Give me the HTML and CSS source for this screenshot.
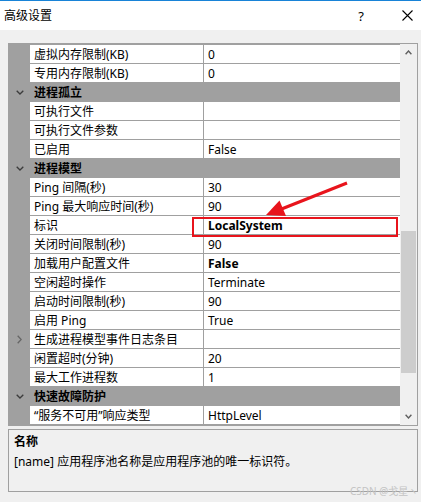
FILE: index.html
```html
<!DOCTYPE html>
<html lang="zh-CN">
<head>
<meta charset="utf-8">
<title>高级设置</title>
<link rel="stylesheet" href="styles.css">
</head>
<body>
<div class="titlebar">
  <span class="title">高级设置</span>
  <span class="help">?</span>
  <span class="close"><svg width="11" height="11" viewBox="0 0 11 11"><path d="M0.5 0.5 L10.5 10.5 M10.5 0.5 L0.5 10.5" stroke="#000" stroke-width="1.1" fill="none"/></svg></span>
</div>
<div class="main">
  <div class="grid">
    <div class="rows">
      <div class="row"><span class="gutter"></span><span class="label">虚拟内存限制(KB)</span><span class="value">0</span></div>
      <div class="row"><span class="gutter"></span><span class="label">专用内存限制(KB)</span><span class="value">0</span></div>
      <div class="row group"><span class="gutter"><svg class="chev" width="8" height="5" viewBox="0 0 8 5"><path d="M0.7 0.7 L4 4 L7.3 0.7" stroke="#3c3c3c" stroke-width="1.3" fill="none"/></svg></span><span class="glabel">进程孤立</span></div>
      <div class="row"><span class="gutter"></span><span class="label">可执行文件</span><span class="value"></span></div>
      <div class="row"><span class="gutter"></span><span class="label">可执行文件参数</span><span class="value"></span></div>
      <div class="row"><span class="gutter"></span><span class="label">已启用</span><span class="value">False</span></div>
      <div class="row group"><span class="gutter"><svg class="chev" width="8" height="5" viewBox="0 0 8 5"><path d="M0.7 0.7 L4 4 L7.3 0.7" stroke="#3c3c3c" stroke-width="1.3" fill="none"/></svg></span><span class="glabel">进程模型</span></div>
      <div class="row"><span class="gutter"></span><span class="label">Ping 间隔(秒)</span><span class="value">30</span></div>
      <div class="row"><span class="gutter"></span><span class="label">Ping 最大响应时间(秒)</span><span class="value">90</span></div>
      <div class="row"><span class="gutter"></span><span class="label">标识</span><span class="value bold">LocalSystem</span></div>
      <div class="row"><span class="gutter"></span><span class="label">关闭时间限制(秒)</span><span class="value">90</span></div>
      <div class="row"><span class="gutter"></span><span class="label">加载用户配置文件</span><span class="value bold">False</span></div>
      <div class="row"><span class="gutter"></span><span class="label">空闲超时操作</span><span class="value">Terminate</span></div>
      <div class="row"><span class="gutter"></span><span class="label">启动时间限制(秒)</span><span class="value">90</span></div>
      <div class="row"><span class="gutter"></span><span class="label">启用 Ping</span><span class="value">True</span></div>
      <div class="row"><span class="gutter"><svg class="chev" width="5" height="9" viewBox="0 0 5 9"><path d="M0.7 0.7 L4.2 4.5 L0.7 8.3" stroke="#666" stroke-width="1.3" fill="none"/></svg></span><span class="label">生成进程模型事件日志条目</span><span class="value"></span></div>
      <div class="row"><span class="gutter"></span><span class="label">闲置超时(分钟)</span><span class="value">20</span></div>
      <div class="row"><span class="gutter"></span><span class="label">最大工作进程数</span><span class="value">1</span></div>
      <div class="row group"><span class="gutter"><svg class="chev" width="8" height="5" viewBox="0 0 8 5"><path d="M0.7 0.7 L4 4 L7.3 0.7" stroke="#3c3c3c" stroke-width="1.3" fill="none"/></svg></span><span class="glabel">快速故障防护</span></div>
      <div class="row"><span class="gutter"></span><span class="label">“服务不可用”响应类型</span><span class="value">HttpLevel</span></div>
    </div>
    <div class="scrollbar">
      <span class="sb-arrow"><svg width="7" height="5" viewBox="0 0 7 5"><path d="M0.6 4.2 L3.5 1 L6.4 4.2" stroke="#606060" stroke-width="1.4" fill="none"/></svg></span>
      <div class="track"><div class="thumb"></div></div>
      <span class="sb-arrow"><svg width="7" height="5" viewBox="0 0 7 5"><path d="M0.6 0.8 L3.5 4 L6.4 0.8" stroke="#606060" stroke-width="1.4" fill="none"/></svg></span>
    </div>
  </div>
  <div class="desc">
    <div class="desc-title">名称</div>
    <div class="desc-text">[name] 应用程序池名称是应用程序池的唯一标识符。</div>
  </div>
  <div class="buttons">
    <span class="btn"></span>
    <span class="btn"></span>
  </div>
</div>
<div class="watermark">CSDN @戈星ヽ</div>
<svg class="annot" width="421" height="502" viewBox="0 0 421 502">
  <rect x="193" y="218" width="204" height="18" fill="none" stroke="#e8141c" stroke-width="2"/>
  <line x1="347" y1="183" x2="279" y2="210" stroke="#e8141c" stroke-width="3"/>
  <polygon points="266,215 279.5,200.5 286,216" fill="#e8141c"/>
</svg>
</body>
</html>
```

FILE: styles.css
```css
html, body {
  margin: 0;
  padding: 0;
}

body {
  width: 421px;
  height: 502px;
  overflow: hidden;
  position: relative;
  background: #f0f0f0;
  font-family: "Noto Sans", "Noto Sans CJK SC", sans-serif;
  font-size: 12px;
  color: #000;
}

.titlebar {
  height: 29px;
  border-top: 1px solid #1883d7;
  background: #fff;
  display: flex;
  align-items: center;
  padding-left: 4px;
  padding-right: 4px;
}

.title {
  flex: 1;
  font-size: 12px;
  line-height: 16px;
  padding-top: 1px;
}

.help {
  width: 20px;
  text-align: center;
  font-size: 13px;
  line-height: 16px;
  margin-right: 26px;
}

.close {
  width: 20px;
  display: flex;
  justify-content: center;
  align-items: center;
}

.main {
  padding: 13px 3px 0 8px;
}

.grid {
  display: flex;
  border: 1px solid #a0a0a0;
}

.rows {
  width: 391px;
  display: flex;
  flex-direction: column;
  gap: 1px;
  padding: 1px 0;
  background: #a0a0a0;
}

.row {
  display: flex;
  height: 18px;
  line-height: 19px;
}

.gutter {
  width: 21px;
  flex: none;
  display: flex;
  align-items: center;
  justify-content: center;
}

.label {
  width: 169px;
  flex: none;
  background: #fff;
  padding-left: 4px;
  margin-right: 1px;
  white-space: nowrap;
  overflow: hidden;
}

.value {
  flex: 1;
  background: #fff;
  padding-left: 4px;
  white-space: nowrap;
}

.bold {
  font-weight: 700;
}

.glabel {
  padding-left: 4px;
  font-weight: 700;
}

.scrollbar {
  width: 17px;
  flex: none;
  background: #f0f0f0;
  display: flex;
  flex-direction: column;
}

.sb-arrow {
  height: 17px;
  display: flex;
  align-items: center;
  justify-content: center;
}

.track {
  flex: 1;
}

.thumb {
  margin-top: 170px;
  margin-left: 1px;
  width: 15px;
  height: 142px;
  background: #cdcdcd;
}

.desc {
  margin-top: 3px;
  height: 57px;
  border: 1px solid #a0a0a0;
  padding: 4px 5px 0;
}

.desc-title {
  font-weight: 700;
  line-height: 16px;
}

.desc-text {
  margin-top: 4px;
  line-height: 16px;
}

.buttons {
  display: flex;
  justify-content: flex-end;
  gap: 14px;
  margin-top: 12px;
}

.btn {
  width: 81px;
  height: 21px;
  border: 1px solid #adadad;
  background: #e1e1e1;
}

.btn + .btn {
  width: 82px;
}

.watermark {
  position: absolute;
  left: 350px;
  top: 485px;
  font-size: 10px;
  line-height: 12px;
  color: #c4c4c4;
}

.annot {
  position: absolute;
  left: 0;
  top: 0;
  pointer-events: none;
}
```
